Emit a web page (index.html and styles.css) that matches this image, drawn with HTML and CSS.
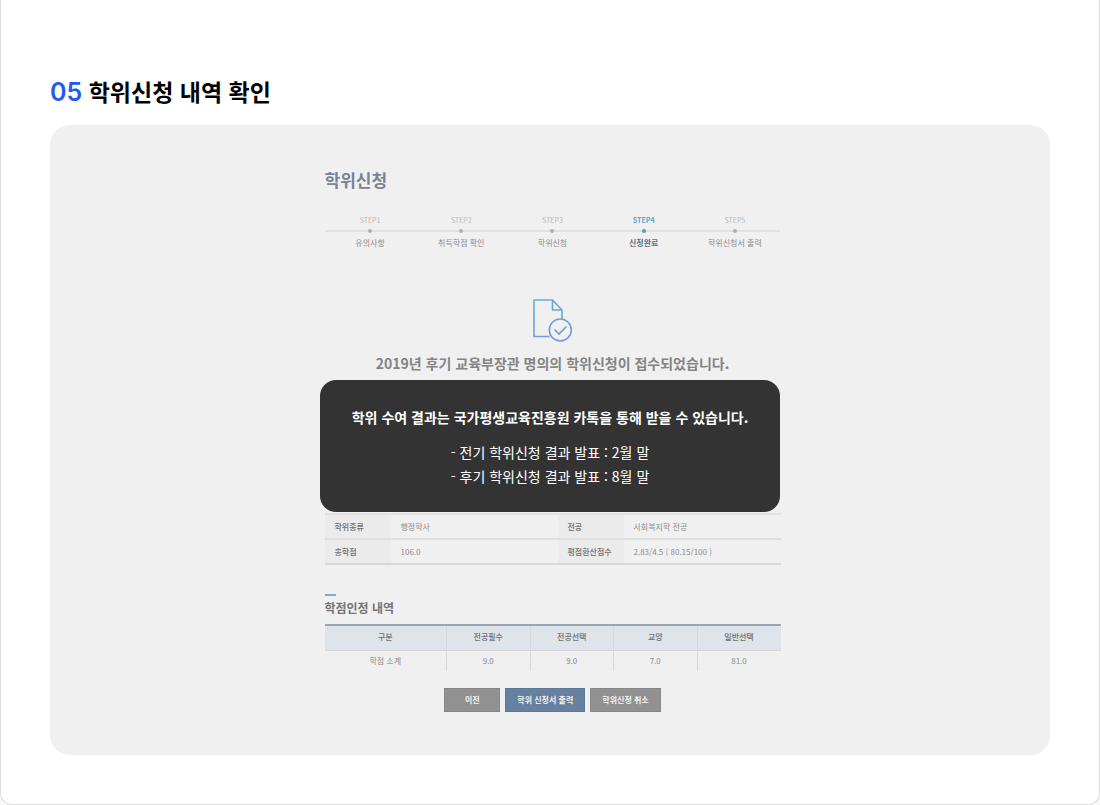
FILE: index.html
```html
<!DOCTYPE html>
<html lang="ko">
<head>
<meta charset="utf-8">
<title>학위신청 내역 확인</title>
<link rel="stylesheet" href="styles.css">
</head>
<body>
<main class="card">
  <h1 class="card-title"><span class="card-number">05</span> 학위신청 내역 확인</h1>
  <section class="panel">
    <div class="preview">
      <h2 class="preview-title">학위신청</h2>
      <ol class="steps">
        <li class="step"><span class="step-name">STEP1</span><span class="dot"></span><span class="step-label">유의사항</span></li>
        <li class="step"><span class="step-name">STEP2</span><span class="dot"></span><span class="step-label">취득학점 확인</span></li>
        <li class="step"><span class="step-name">STEP3</span><span class="dot"></span><span class="step-label">학위신청</span></li>
        <li class="step current"><span class="step-name">STEP4</span><span class="dot"></span><span class="step-label">신청완료</span></li>
        <li class="step"><span class="step-name">STEP5</span><span class="dot"></span><span class="step-label">학위신청서 출력</span></li>
      </ol>
      <svg class="done-icon" width="40" height="43" viewBox="0 0 40 43" fill="none" stroke="url(#tone)" stroke-width="1.6" aria-hidden="true">
        <defs><linearGradient id="tone" gradientUnits="userSpaceOnUse" x1="0" y1="0" x2="0" y2="43"><stop offset="0" stop-color="#62afd3"/><stop offset="1" stop-color="#7797da"/></linearGradient></defs>
        <path d="M16.500 37.500H1V1H19.500L29 11V20"/>
        <path d="M19.500 1V11H29"/>
        <circle cx="27.300" cy="31" r="11"/>
        <path d="M21.500 30.500L26 35L33.500 27.500"/>
      </svg>
      <p class="message">2019년 후기 교육부장관 명의의 학위신청이 접수되었습니다.</p>
      <table class="info">
        <colgroup><col class="head-col"><col class="left-col"><col class="head-col"><col></colgroup>
        <tr><th scope="row">학위종류</th><td>행정학사</td><th scope="row">전공</th><td>사회복지학 전공</td></tr>
        <tr><th scope="row">총학점</th><td>106.0</td><th scope="row">평점환산점수</th><td>2.83/4.5 ( 80.15/100 )</td></tr>
      </table>
      <h3 class="section-title">학점인정 내역</h3>
      <table class="credits">
        <colgroup><col class="first-col"><col><col><col><col></colgroup>
        <thead><tr><th scope="col">구분</th><th scope="col">전공필수</th><th scope="col">전공선택</th><th scope="col">교양</th><th scope="col">일반선택</th></tr></thead>
        <tbody><tr><td>학점 소계</td><td>9.0</td><td>9.0</td><td>7.0</td><td>81.0</td></tr></tbody>
      </table>
      <div class="actions">
        <button type="button" class="btn">이전</button>
        <button type="button" class="btn primary">학위 신청서 출력</button>
        <button type="button" class="btn">학위신청 취소</button>
      </div>
    </div>
    <div class="notice">
      <strong class="notice-title">학위 수여 결과는 국가평생교육진흥원 카톡을 통해 받을 수 있습니다.</strong>
      <p class="notice-text">- 전기 학위신청 결과 발표 : 2월 말</p>
      <p class="notice-text">- 후기 학위신청 결과 발표 : 8월 말</p>
    </div>
  </section>
</main>
</body>
</html>
```
FILE: styles.css
```css
* { box-sizing: border-box; }
body {
  margin: 0;
  background: #f8f8f8;
  font-family: "Noto Sans CJK KR", sans-serif;
}
h1, h2, h3, p, ol { margin: 0; padding: 0; }

.card {
  padding: 73px 49px 49px;
  background: #fff;
  border: 1px solid #ddd;
  border-top: 0;
  border-radius: 0 0 12px 12px;
}
.card-title {
  margin-bottom: 16px;
  font-size: 23px;
  font-weight: 700;
  line-height: 36px;
  color: #000;
}
.card-number {
  font-family: Inter, sans-serif;
  font-size: 25px;
  line-height: 24px;
  font-weight: 600;
  color: #2459f8;
}
.panel {
  position: relative;
  padding: 43px 0 43px 5px;
  background: #f0f0f0;
  border-radius: 20px;
}
.preview {
  width: 456px;
  max-width: 100%;
  margin: 0 auto;
  font-size: 8px;
  line-height: 12px;
  color: #8c8c8c;
}
.preview-title {
  font-size: 17px;
  font-weight: 700;
  line-height: 24px;
  color: #788494;
}

.steps {
  display: grid;
  grid-template-columns: repeat(5, 1fr);
  margin-top: 22px;
  list-style: none;
}
.step {
  display: flex;
  flex-direction: column;
  align-items: center;
}
.step-name { font-size: 7px; color: #b8b8b8; }
.dot {
  display: flex;
  align-items: center;
  justify-content: center;
  width: 100%;
  height: 10px;
  margin-bottom: 1px;
  background: linear-gradient(#e0e0e0, #e0e0e0) center / 100% 2px no-repeat;
}
.dot::before {
  content: "";
  width: 4px;
  height: 4px;
  border-radius: 50%;
  background: #b0b0b0;
}
.current .step-name { font-weight: 700; color: #5da9cf; }
.current .dot::before { background: #4b9fca; }
.current .step-label { font-weight: 700; color: #617085; }

.done-icon { display: block; margin: 50px auto 0; }
.message {
  margin-top: 11px;
  font-size: 14px;
  font-weight: 700;
  line-height: 20px;
  text-align: center;
  color: #848484;
}

table {
  width: 100%;
  table-layout: fixed;
  border-collapse: collapse;
}
.info {
  margin-top: 140px;
  border-top: 2px solid #e2e2e2;
  border-bottom: 2px solid #d8d8d8;
  text-align: left;
}
.head-col { width: 66px; }
.left-col { width: 167px; }
.info th, .info td { height: 25px; padding: 0 10px; }
.info tr + tr { border-top: 2px solid #dedede; }
.info th { background: #ebebeb; font-weight: 500; color: #6c6c6c; white-space: nowrap; }

.section-title {
  margin-top: 29px;
  font-size: 12px;
  font-weight: 700;
  line-height: 20px;
  color: #747474;
}
.section-title::before {
  content: "";
  display: block;
  width: 11px;
  height: 2px;
  margin-bottom: 2px;
  background: #82aebc;
}
.credits {
  margin-top: 6px;
  border-top: 2px solid #9aa6b5;
  text-align: center;
}
.first-col { width: 122px; }
.credits th {
  height: 25px;
  padding: 0 0 2px;
  background: #dfe3ea;
  border-bottom: 1px solid #d2d6da;
  font-weight: 500;
  color: #6d7076;
}
.credits td { height: 21px; padding: 0; }
.credits th + th, .credits td + td { border-left: 1px solid #d5d8dd; }

.actions {
  display: flex;
  justify-content: center;
  gap: 5px;
  margin-top: 17px;
}
.btn {
  min-width: 56px;
  height: 24px;
  padding: 0 11px;
  border: 1px solid #888;
  background: #919191;
  font: 700 8px/12px "Noto Sans CJK KR", sans-serif;
  color: #f2f2f2;
}
.primary { border-color: #5d7899; background: #67809f; }

.notice {
  position: absolute;
  top: 255px;
  left: 50%;
  width: 460px;
  max-width: 100%;
  padding: 25px 20px 24px;
  border-radius: 16px;
  background: #333;
  color: #fff;
  text-align: center;
  transform: translateX(-50%);
}
.notice-title {
  display: block;
  margin-bottom: 11px;
  font-size: 14px;
  line-height: 24px;
}
.notice-text { font-size: 14px; line-height: 24px; }
```
